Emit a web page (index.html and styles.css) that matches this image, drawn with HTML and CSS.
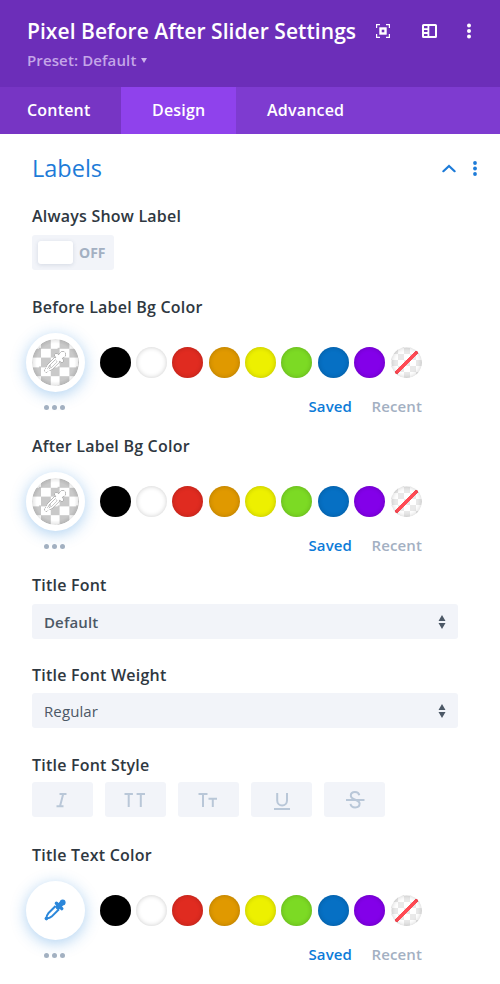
FILE: index.html
```html
<!DOCTYPE html>
<html lang="en">
<head>
    <meta charset="UTF-8">
    <meta name="viewport" content="width=device-width, initial-scale=1.0">
    <title>Pixel Before After Slider Settings</title>
    <link rel="stylesheet" href="styles.css">
</head>
<body>
    <!-- shared icons -->
    <svg class="sprite" width="0" height="0" aria-hidden="true">
        <symbol id="dropper" viewBox="0 0 22 22">
            <path d="M11.6 7 4.3 14.3Q2.6 16.2 2.2 19.6Q5.8 19.2 7.6 17.6L15 10.2" fill="none" stroke="currentColor" stroke-width="2" stroke-linejoin="round"/>
            <path d="M14 8 18 4" fill="none" stroke="currentColor" stroke-width="5" stroke-linecap="round"/>
            <path d="M12.4 4.2 17.8 9.6" fill="none" stroke="currentColor" stroke-width="3.4" stroke-linecap="round"/>
            <circle cx="18.7" cy="3.4" r="2.9" fill="currentColor"/>
            <circle cx="2.4" cy="19.6" r="1.8" fill="currentColor"/>
        </symbol>
        <symbol id="arrows" viewBox="0 0 8 14">
            <path d="M4 0 7.5 6H.5zM4 14 .5 8h7z" fill="currentColor"/>
        </symbol>
    </svg>

    <div class="header">
        <div class="header-text">
            <h1>Pixel Before After Slider Settings</h1>
            <div class="preset">Preset: Default <span class="caret"></span></div>
        </div>
        <div class="header-icons">
            <svg width="14" height="14" viewBox="0 0 14 14">
                <path d="M.6 4V.6H4M10 .6h3.4V4M13.4 10v3.4H10M4 13.4H.6V10" fill="none" stroke="#fff" stroke-width="1.2"/>
                <rect x="4.5" y="4.5" width="5" height="5" fill="none" stroke="#fff" stroke-width="2.4"/>
            </svg>
            <svg width="15" height="14" viewBox="0 0 15 14">
                <rect x="1" y="1" width="13" height="12" rx=".6" fill="none" stroke="#fff" stroke-width="2"/>
                <path d="M6.4 1v12M1 5.1h5M1 9h5" fill="none" stroke="#fff" stroke-width="1.8"/>
            </svg>
            <svg width="4" height="16" viewBox="0 0 4 16" fill="#fff">
                <circle cx="2" cy="2.4" r="2"/><circle cx="2" cy="8" r="2"/><circle cx="2" cy="13.6" r="2"/>
            </svg>
        </div>
    </div>

    <div class="tabs">
        <div class="tab tab-content">Content</div>
        <div class="tab active">Design</div>
        <div class="tab">Advanced</div>
    </div>

    <div class="panel">
        <div class="section-head">
            <h2>Labels</h2>
            <div class="section-icons">
                <svg width="14" height="9" viewBox="0 0 14 9"><path d="M1.4 7.2 7 1.9l5.6 5.3" fill="none" stroke="#1d7bd8" stroke-width="2.2" stroke-linecap="round"/></svg>
                <svg width="4" height="15" viewBox="0 0 4 15" fill="#1d7bd8">
                    <circle cx="2" cy="2" r="1.9"/><circle cx="2" cy="7.5" r="1.9"/><circle cx="2" cy="13" r="1.9"/>
                </svg>
            </div>
        </div>

        <div class="field field-toggle">
            <label>Always Show Label</label>
            <div class="toggle"><span class="knob"></span><span class="toggle-text">OFF</span></div>
        </div>

        <div class="field field-before">
            <label>Before Label Bg Color</label>
            <div class="colors">
                <div class="picker checker"><svg class="outlined" width="22" height="22"><use href="#dropper"/></svg></div>
                <div class="swatches">
                    <span class="swatch black"></span><span class="swatch white"></span><span class="swatch red"></span>
                    <span class="swatch orange"></span><span class="swatch yellow"></span><span class="swatch green"></span>
                    <span class="swatch blue"></span><span class="swatch purple"></span><span class="swatch none"></span>
                </div>
            </div>
            <div class="colors-foot">
                <span class="dots"><i></i><i></i><i></i></span>
                <span class="saved">Saved</span><span class="recent">Recent</span>
            </div>
        </div>

        <div class="field field-after">
            <label>After Label Bg Color</label>
            <div class="colors">
                <div class="picker checker"><svg class="outlined" width="22" height="22"><use href="#dropper"/></svg></div>
                <div class="swatches">
                    <span class="swatch black"></span><span class="swatch white"></span><span class="swatch red"></span>
                    <span class="swatch orange"></span><span class="swatch yellow"></span><span class="swatch green"></span>
                    <span class="swatch blue"></span><span class="swatch purple"></span><span class="swatch none"></span>
                </div>
            </div>
            <div class="colors-foot">
                <span class="dots"><i></i><i></i><i></i></span>
                <span class="saved">Saved</span><span class="recent">Recent</span>
            </div>
        </div>

        <div class="field field-font">
            <label>Title Font</label>
            <div class="select bold">Default <svg width="8" height="14"><use href="#arrows"/></svg></div>
        </div>

        <div class="field field-weight">
            <label>Title Font Weight</label>
            <div class="select">Regular <svg width="8" height="14"><use href="#arrows"/></svg></div>
        </div>

        <div class="field field-style">
            <label>Title Font Style</label>
            <div class="style-buttons">
                <button title="Italic"><svg width="24" height="20" viewBox="0 0 24 20"><path d="M9.5 4h7M6.5 16.2h7M13.2 4l-3.2 12.2"/></svg></button>
                <button title="Uppercase"><svg width="24" height="20" viewBox="0 0 24 20"><path d="M1.5 4h8.4M5.7 4v13M13.6 4H22M17.8 4v13"/></svg></button>
                <button title="Small caps"><svg width="24" height="20" viewBox="0 0 24 20"><path d="M2.5 4h9M7 4v13M12.5 8.7h8.5M16.8 8.7V17"/></svg></button>
                <button title="Underline"><svg width="24" height="20" viewBox="0 0 24 20"><path d="M7.2 3v7.5a4.9 4.9 0 0 0 9.8 0V3M4 19h16"/></svg></button>
                <button title="Strikethrough"><svg width="24" height="20" viewBox="0 0 24 20"><path d="M16.3 5.2C15.8 3 14.2 2 12 2 9.6 2 7.8 3.4 7.8 5.6c0 5 8.8 3.2 8.8 8 0 2.4-1.8 3.9-4.4 3.9-2.5 0-4.3-1.2-4.7-3.6M3 10h18.5"/></svg></button>
            </div>
        </div>

        <div class="field field-color">
            <label>Title Text Color</label>
            <div class="colors">
                <div class="picker"><svg width="22" height="22"><use href="#dropper"/></svg></div>
                <div class="swatches">
                    <span class="swatch black"></span><span class="swatch white"></span><span class="swatch red"></span>
                    <span class="swatch orange"></span><span class="swatch yellow"></span><span class="swatch green"></span>
                    <span class="swatch blue"></span><span class="swatch purple"></span><span class="swatch none"></span>
                </div>
            </div>
            <div class="colors-foot">
                <span class="dots"><i></i><i></i><i></i></span>
                <span class="saved">Saved</span><span class="recent">Recent</span>
            </div>
        </div>
    </div>
</body>
</html>
```
FILE: styles.css
```css
* {
    box-sizing: border-box;
}
body {
    margin: 0;
    width: 500px;
    height: 984px;
    overflow: hidden;
    background: #fff;
    font-family: "Open Sans", sans-serif;
    font-weight: 600;
    color: #2f3841;
}
.sprite {
    display: block;
    height: 0;
}
svg {
    display: block;
    flex: none;
}
.header {
    display: flex;
    justify-content: space-between;
    height: 87px;
    padding: 16px 29px 0 27px;
    background: #6c2eb9;
    color: #fff;
}
h1 {
    margin: 0;
    font-size: 21px;
    line-height: 30px;
    font-weight: 600;
    letter-spacing: 0.05px;
    white-space: nowrap;
}
.preset {
    display: flex;
    align-items: center;
    line-height: 20px;
    margin-top: 4px;
    font-size: 15px;
    letter-spacing: 0.12px;
    color: #c4a6e8;
}
.caret {
    margin-left: 5px;
    border: 3.5px solid transparent;
    border-top: 5px solid #cdb3ec;
    border-bottom: 0;
}
.header-icons {
    display: flex;
    align-items: center;
    justify-content: space-between;
    width: 95px;
    height: 30px;
}
.header-icons svg:nth-child(2) {
    margin-left: 2px;
}
.tabs {
    display: flex;
    height: 47px;
    background: #7e3bd0;
    color: #fff;
    font-size: 16px;
    letter-spacing: 0.2px;
    line-height: 47px;
}
.tab {
    padding: 0 31px;
}
.tab-content {
    width: 121px;
    padding: 0 0 0 27px;
    background: #7735c4;
}
.tab.active {
    width: 115px;
    background: #8f42ec;
}
.panel {
    padding: 17px 42px 0 32px;
}
.section-head {
    display: flex;
    justify-content: space-between;
    height: 34px;
    margin-right: -19px;
}
h2 {
    margin: 0;
    font-size: 23.5px;
    line-height: 34px;
    font-weight: 400;
    color: #1d7bd8;
}
.section-icons {
    display: flex;
    align-items: center;
    gap: 17px;
    height: 35px;
}
label {
    display: block;
    font-size: 16px;
    letter-spacing: 0.22px;
    line-height: 20px;
}
.field-toggle {
    margin-top: 21px;
}
.field-before {
    margin-top: 27px;
}
.field-after {
    margin-top: 20px;
}
.field-font {
    margin-top: 20px;
}
.field-weight {
    margin-top: 26px;
}
.field-style {
    margin-top: 27px;
}
.field-color {
    margin-top: 28px;
}
.toggle {
    display: flex;
    align-items: center;
    width: 82px;
    height: 35px;
    margin-top: 9px;
    padding-left: 6px;
    border-radius: 3px;
    background: #f2f4f9;
}
.knob {
    width: 35px;
    height: 23px;
    border-radius: 3px;
    background: #fff;
    box-shadow: 0 1px 4px rgba(60, 80, 120, 0.16);
}
.toggle-text {
    margin-left: 6px;
    font-size: 14px;
    font-weight: 700;
    color: #a3b0c2;
}
.colors {
    display: flex;
    align-items: center;
    height: 59px;
    margin: 15.5px 0 0 -6px;
}
.picker {
    display: flex;
    align-items: center;
    justify-content: center;
    width: 59px;
    height: 59px;
    padding-right: 2px;
    border: 6px solid #fff;
    border-radius: 50%;
    background: #fff;
    color: #2b87da;
    box-shadow: 0 3px 15px rgba(43, 135, 218, 0.38);
}
.checker {
    background:
        radial-gradient(circle closest-side, transparent 80%, rgba(0, 0, 0, 0.1) 100%) padding-box,
        conic-gradient(#fff 25%, #c9c9c9 0 50%, #fff 0 75%, #c9c9c9 0) 9px 0 / 18.6px 18.6px padding-box,
        #fff;
    color: #fff;
}
.outlined {
    overflow: visible;
    filter: drop-shadow(0 0 0.7px #555) drop-shadow(0 0 0.7px #888);
}
.swatches {
    display: flex;
    gap: 5.4px;
    margin-left: 14.5px;
}
.swatch {
    width: 31px;
    height: 31px;
    border-radius: 50%;
    box-shadow: inset 0 0 5px rgba(0, 0, 0, 0.2);
}
.black {
    background: #000;
}
.white {
    background: #fff;
}
.red {
    background: #e02b20;
}
.orange {
    background: #e09900;
}
.yellow {
    background: #edf000;
}
.green {
    background: #7cda24;
}
.blue {
    background: #0670c4;
}
.purple {
    background: #8300e9;
}
.none {
    background:
        linear-gradient(135deg, transparent calc(50% - 2px), #ff4b55 calc(50% - 1.5px) calc(50% + 1.5px), transparent calc(50% + 2px)) center / 23px 23px no-repeat,
        conic-gradient(#fff 25%, #e9e9e9 0 50%, #fff 0 75%, #e9e9e9 0) 1px 1px / 12px 12px;
}
.colors-foot {
    display: flex;
    align-items: center;
    height: 20px;
    margin-top: 4.5px;
    padding-left: 12px;
    font-size: 15px;
    letter-spacing: 0.12px;
}
.dots {
    display: flex;
    gap: 3px;
    width: 264.5px;
    padding-top: 3px;
}
.dots i {
    width: 5px;
    height: 5px;
    border-radius: 50%;
    background: #a2b0c1;
}
.saved {
    width: 63px;
    color: #0c7bd8;
}
.recent {
    color: #a3b0c2;
}
.select {
    display: flex;
    align-items: center;
    justify-content: space-between;
    height: 35px;
    margin-top: 9px;
    padding: 0 12px;
    border-radius: 3px;
    background: #f2f4f9;
    color: #4c5866;
    font-size: 15px;
    font-weight: 400;
    letter-spacing: 0.1px;
}
.field-weight .select {
    margin-top: 8px;
}
.select.bold {
    font-weight: 600;
    letter-spacing: 0.12px;
}
.style-buttons {
    display: flex;
    gap: 12.6px;
    margin-top: 7px;
}
.style-buttons button {
    display: flex;
    align-items: center;
    justify-content: center;
    width: 60.5px;
    height: 35px;
    padding: 0;
    border: none;
    border-radius: 3px;
    background: #f2f4f9;
}
.style-buttons path {
    fill: none;
    stroke: #b9c7d8;
    stroke-width: 2;
}
```
